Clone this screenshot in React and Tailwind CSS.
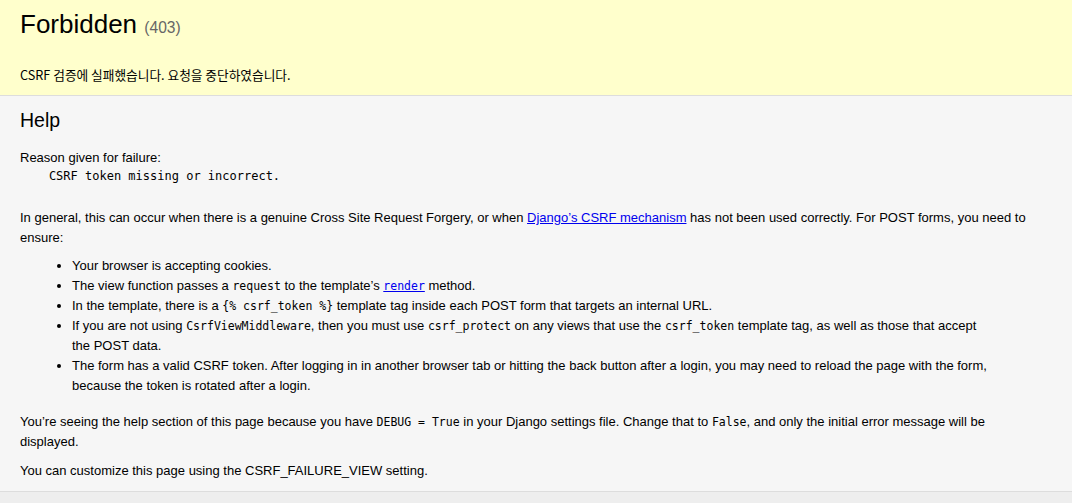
export default function App() {
  const code = "font-['DejaVu_Sans_Mono',monospace] text-[11.5px]";
  return (
    <div className="min-h-[503px] bg-[#eee] text-black font-['Liberation_Sans','Noto_Sans_CJK_KR',Arial,sans-serif] text-[13px] leading-[20px]">
      <div className="bg-[#ffc] border-b border-[#ddd] px-5 py-[10px]">
        <h1 className="text-[26px] leading-[29px] font-normal mb-[16px]">
          Forbidden <span className="text-[15.6px] leading-[15px] text-[#666]">(403)</span>
        </h1>
        <p className="pt-[10px] font-['Noto_Sans_CJK_KR',sans-serif] text-[12.7px] leading-[20px]">
          CSRF 검증에 실패했습니다. 요청을 중단하였습니다.
        </p>
      </div>
      <div className="bg-[#f6f6f6] border-b border-[#ddd] px-5 py-[10px]">
        <h2 className="text-[19.5px] leading-[29px] font-normal">Help</h2>
        <p className="pt-[13px]">Reason given for failure:</p>
        <pre className="mt-[1px] font-['DejaVu_Sans_Mono',monospace] text-[12px] leading-[15px]">
          {"    CSRF token missing or incorrect.\n    "}
        </pre>
        <p className="pt-[9px]">
          In general, this can occur when there is a genuine Cross Site Request Forgery, or when{" "}
          <a href="#" className="text-[#0000ee] underline">Django’s CSRF mechanism</a> has not been used correctly. For POST forms, you need to
          <br />
          ensure:
        </p>
        <ul className="list-disc ml-[52px] mt-[7.5px] mb-[6.5px]">
          <li>Your browser is accepting cookies.</li>
          <li>
            The view function passes a <code className={code}>request</code> to the template’s{" "}
            <a href="#" className="text-[#0000ee] underline"><code className={code}>render</code></a> method.
          </li>
          <li>
            In the template, there is a <code className={code}>{"{% csrf_token %}"}</code> template tag inside each POST form that targets an internal URL.
          </li>
          <li>
            If you are not using <code className={code}>CsrfViewMiddleware</code>, then you must use{" "}
            <code className={code}>csrf_protect</code> on any views that use the <code className={code}>csrf_token</code> template tag, as well as those that accept
            <br />
            the POST data.
          </li>
          <li>
            The form has a valid CSRF token. After logging in in another browser tab or hitting the back button after a login, you may need to reload the page with the form,
            <br />
            because the token is rotated after a login.
          </li>
        </ul>
        <p className="pt-[10px]">
          You’re seeing the help section of this page because you have <code className={code}>DEBUG = True</code> in your Django settings file. Change that to <code className={code}>False</code>, and only the initial error message will be
          <br />
          displayed.
        </p>
        <p className="pt-[9px]">You can customize this page using the CSRF_FAILURE_VIEW setting.</p>
      </div>
    </div>
  );
}
